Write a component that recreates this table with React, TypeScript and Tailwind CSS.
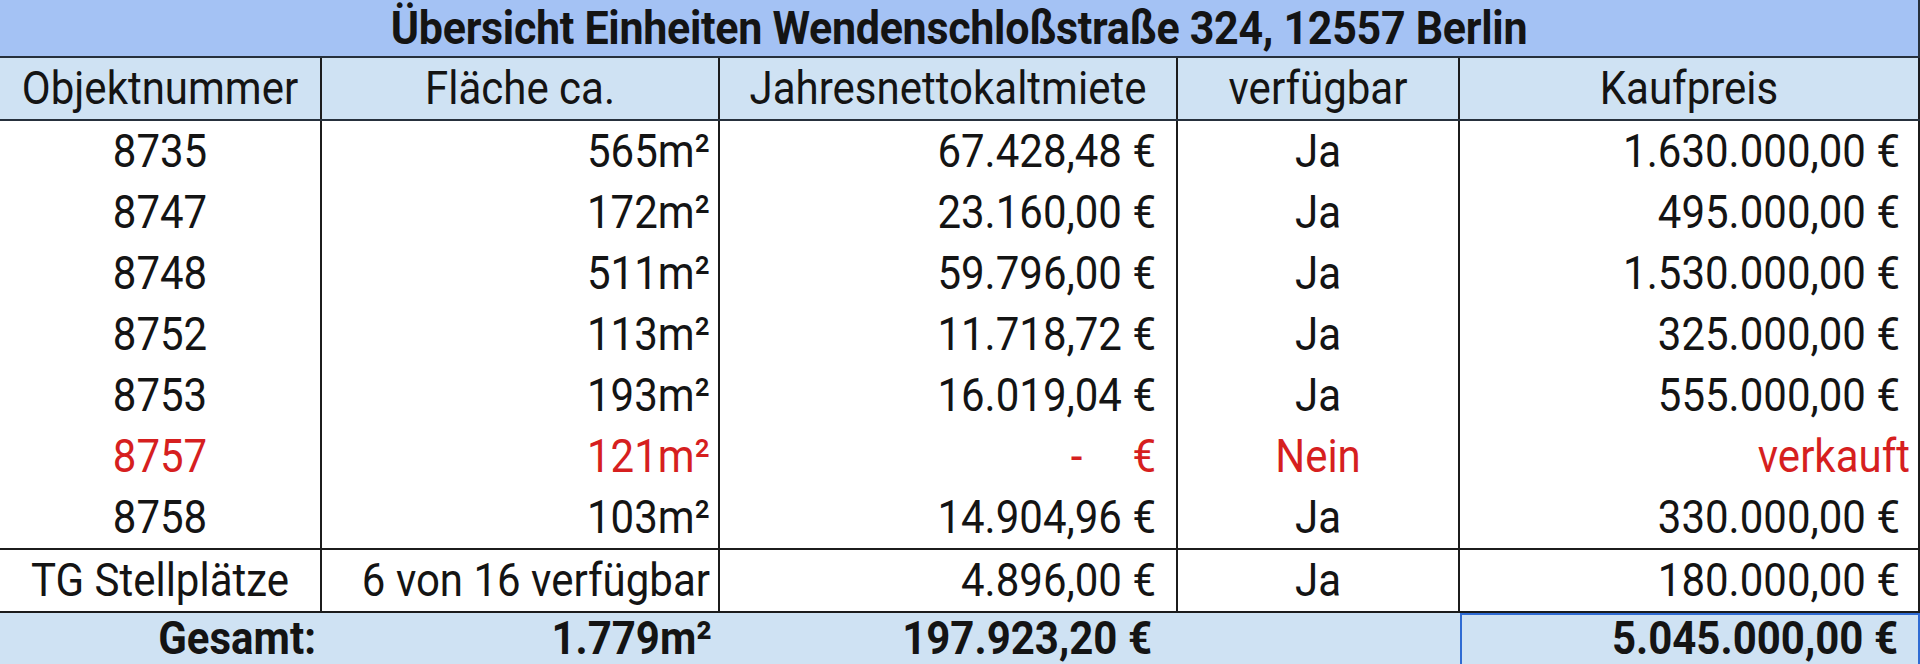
import React from 'react';

type Unit = {
  nr: string;
  area: string;
  rent: string | null;
  available: string;
  price: string;
  sold?: boolean;
};

const units: Unit[] = [
  { nr: "8735", area: "565m²", rent: "67.428,48 €", available: "Ja", price: "1.630.000,00 €" },
  { nr: "8747", area: "172m²", rent: "23.160,00 €", available: "Ja", price: "495.000,00 €" },
  { nr: "8748", area: "511m²", rent: "59.796,00 €", available: "Ja", price: "1.530.000,00 €" },
  { nr: "8752", area: "113m²", rent: "11.718,72 €", available: "Ja", price: "325.000,00 €" },
  { nr: "8753", area: "193m²", rent: "16.019,04 €", available: "Ja", price: "555.000,00 €" },
  { nr: "8757", area: "121m²", rent: null, available: "Nein", price: "verkauft", sold: true },
  { nr: "8758", area: "103m²", rent: "14.904,96 €", available: "Ja", price: "330.000,00 €" },
];

const cols = "grid grid-cols-[322px_398px_458px_282px_460px]";
const cell = "flex items-center h-[61px] border-r-2 border-[#1c1c1c] whitespace-nowrap";
const total = "flex items-center h-[58px] pb-[6px] whitespace-nowrap";

// the sheet text renders a bit taller than plain Roboto
const T = ({ children }: { children: React.ReactNode }) => (
  <span className="inline-block scale-y-[1.1]">{children}</span>
);

const App = () => {
  return (
    <div className="w-[1920px] h-[664px] overflow-hidden bg-white font-['Roboto',sans-serif] text-[42px] leading-none text-[#141414]">
      {/* title */}
      <div className="h-[58px] flex items-center justify-center bg-[#a4c2f4] border-r-2 border-b-2 border-[#26303c]">
        <span className="inline-block scale-y-[1.08] font-bold text-[43px] tracking-[-0.3px]">
          Übersicht Einheiten Wendenschloßstraße 324, 12557 Berlin
        </span>
      </div>

      {/* header */}
      <div className={cn(cols, "bg-[#cfe2f3] border-b-2 border-[#26303c]")}>
        <div className={cn(cell, "h-[59px] justify-center")}><T>Objektnummer</T></div>
        <div className={cn(cell, "h-[59px] justify-center")}><T>Fläche ca.</T></div>
        <div className={cn(cell, "h-[59px] justify-center")}><T>Jahresnettokaltmiete</T></div>
        <div className={cn(cell, "h-[59px] justify-center")}><T>verfügbar</T></div>
        <div className={cn(cell, "h-[59px] justify-center")}><T>Kaufpreis</T></div>
      </div>

      {/* units */}
      {units.map((u) => {
        const color = u.sold ? "text-[#d61f1f]" : "";
        return (
          <div key={u.nr} className={cols}>
            <div className={cn(cell, "justify-center", color)}><T>{u.nr}</T></div>
            <div className={cn(cell, "justify-end pr-[8px]", color)}><T>{u.area}</T></div>
            <div className={cn(cell, "justify-end pr-[20px]", color)}>
              {u.rent ? (
                <T>{u.rent}</T>
              ) : (
                <>
                  <span className="inline-block scale-y-[1.1] mr-[50px]">-</span>
                  <T>€</T>
                </>
              )}
            </div>
            <div className={cn(cell, "justify-center", color)}><T>{u.available}</T></div>
            <div className={cn(cell, u.sold ? "justify-end pr-[8px]" : "justify-end pr-[18px]", color)}>
              <T>{u.price}</T>
            </div>
          </div>
        );
      })}

      {/* parking */}
      <div className={cn(cols, "border-t-2 border-b-2 border-[#1c1c1c]")}>
        <div className={cn(cell, "h-[59px] justify-center")}><T>TG Stellplätze</T></div>
        <div className={cn(cell, "h-[59px] justify-end pr-[8px]")}><T>6 von 16 verfügbar</T></div>
        <div className={cn(cell, "h-[59px] justify-end pr-[20px]")}><T>4.896,00 €</T></div>
        <div className={cn(cell, "h-[59px] justify-center")}><T>Ja</T></div>
        <div className={cn(cell, "h-[59px] justify-end pr-[18px]")}><T>180.000,00 €</T></div>
      </div>

      {/* total */}
      <div className={cn(cols, "bg-[#cfe2f3] font-bold")}>
        <div className={cn(total, "justify-end pr-[6px]")}><T>Gesamt:</T></div>
        <div className={cn(total, "justify-end pr-[8px]")}><T>1.779m²</T></div>
        <div className={cn(total, "justify-end pr-[26px]")}><T>197.923,20 €</T></div>
        <div className="h-[58px]" />
        <div className={cn(total, "relative justify-end pr-[20px] border-2 border-[#2f6bd3]")}>
          <T>5.045.000,00 €</T>
          <span className="absolute -right-[4px] -bottom-[4px] w-[7px] h-[7px] bg-[#2f6bd3] border border-white" />
        </div>
      </div>
    </div>
  );
};

function cn(...parts: (string | false | undefined)[]) {
  return parts.filter(Boolean).join(" ");
}

export default App;
